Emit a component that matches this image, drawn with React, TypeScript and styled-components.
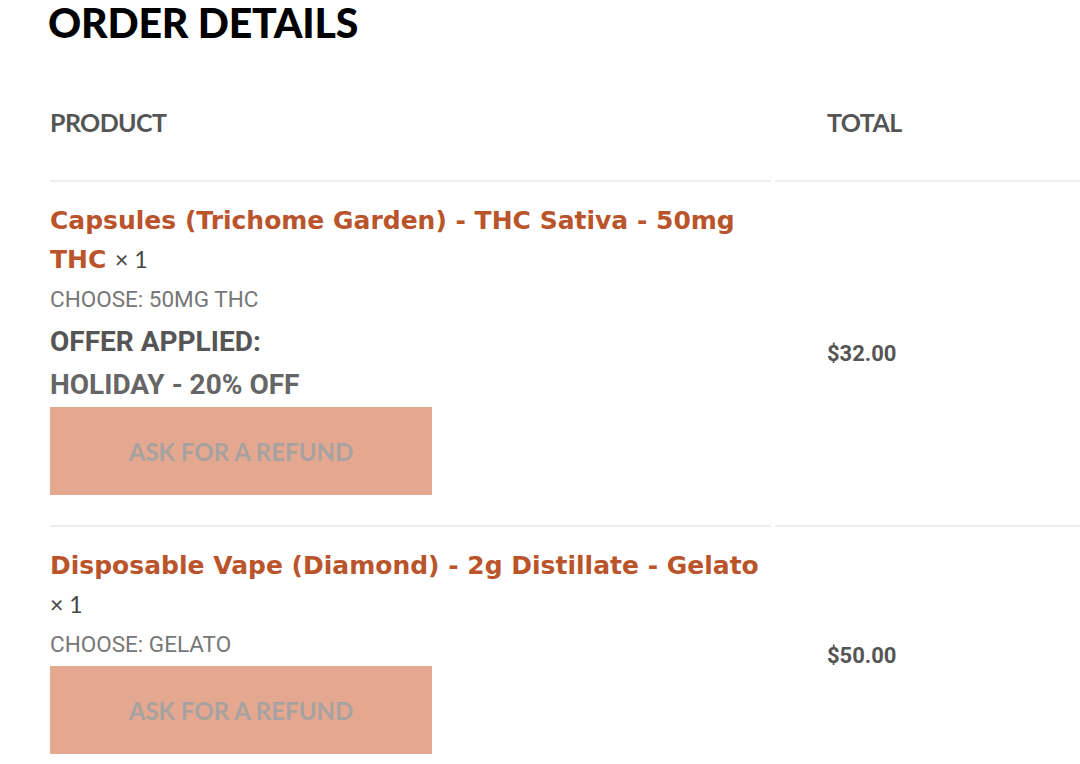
import React from 'react';
import styled, { createGlobalStyle } from 'styled-components';

const GlobalStyle = createGlobalStyle`
  html, body {
    margin: 0;
    padding: 0;
    background: #ffffff;
    overflow: hidden;
  }
`;

const Page = styled.div`
  width: 1080px;
  height: 764px;
  overflow: hidden;
  padding: 1px 0 0 48px;
  box-sizing: border-box;
`;

const Title = styled.h2`
  margin: 0;
  font-family: 'Lato', sans-serif;
  font-weight: 900;
  font-size: 41px;
  line-height: 44px;
  color: #000;
  letter-spacing: -0.2px;
`;

const Table = styled.div`
  margin-top: 57px;
  margin-left: 2px;
  display: grid;
  grid-template-columns: 721px 320px;
  column-gap: 4px;
`;

const HeadCell = styled.div<{ $right?: boolean }>`
  font-family: 'Lato', sans-serif;
  font-weight: 700;
  font-size: 25px;
  line-height: 40px;
  letter-spacing: -0.6px;
  color: #555;
  padding: 0 0 38px ${(p) => (p.$right ? '52px' : '0')};
  border-bottom: 2px solid #eeeeee;
`;

const ProductCell = styled.div`
  border-bottom: 2px solid #eeeeee;
  padding: 19px 0 30px 0;
  display: flex;
  flex-direction: column;
  align-items: flex-start;
`;

const TotalCell = styled.div`
  border-bottom: 2px solid #eeeeee;
  padding-left: 52px;
  display: flex;
  align-items: center;
`;

const ProductName = styled.div`
  font-family: 'DejaVu Sans', sans-serif;
  font-weight: 700;
  font-size: 25px;
  line-height: 39px;
  color: #b9542b;
`;

const Qty = styled.span`
  font-family: 'Lato', sans-serif;
  font-weight: 400;
  font-size: 23px;
  color: #444;
  white-space: nowrap;
`;

const Meta = styled.div`
  margin-top: 6px;
  font-family: 'Roboto', sans-serif;
  font-weight: 400;
  font-size: 22.5px;
  line-height: 28px;
  color: #777;
`;

const OfferLabel = styled.div<{ $tone: string }>`
  margin-top: 15px;
  font-family: 'Roboto', sans-serif;
  font-weight: 700;
  font-size: 28px;
  line-height: 28px;
  color: ${(p) => p.$tone};
`;

const RefundButton = styled.button`
  margin-top: 8px;
  width: 382px;
  height: 88px;
  border: none;
  background: #e4a891;
  color: #a7a2a0;
  font-family: 'Lato', sans-serif;
  font-weight: 700;
  font-size: 24px;
  text-transform: uppercase;
  padding: 0;
`;

const Price = styled.div`
  font-family: 'Roboto', sans-serif;
  font-weight: 700;
  font-size: 22px;
  color: #555;
`;

type Item = {
  name: string;
  option: string;
  offer?: string;
  price: string;
};

const items: Item[] = [
  {
    name: 'Capsules (Trichome Garden) - THC Sativa - 50mg THC',
    option: 'CHOOSE: 50MG THC',
    offer: 'HOLIDAY - 20% OFF',
    price: '$32.00',
  },
  {
    name: 'Disposable Vape (Diamond) - 2g Distillate - Gelato',
    option: 'CHOOSE: GELATO',
    price: '$50.00',
  },
];

const App = () => {
  return (
    <Page>
      <GlobalStyle />
      <Title>ORDER DETAILS</Title>
      <Table>
        <HeadCell>PRODUCT</HeadCell>
        <HeadCell $right>TOTAL</HeadCell>
        {items.map((item) => (
          <React.Fragment key={item.name}>
            <ProductCell>
              <ProductName>
                {item.name} <Qty>× 1</Qty>
              </ProductName>
              <Meta>{item.option}</Meta>
              {item.offer && (
                <>
                  <OfferLabel $tone="#555">OFFER APPLIED:</OfferLabel>
                  <OfferLabel $tone="#666">{item.offer}</OfferLabel>
                </>
              )}
              <RefundButton>Ask for a refund</RefundButton>
            </ProductCell>
            <TotalCell>
              <Price>{item.price}</Price>
            </TotalCell>
          </React.Fragment>
        ))}
      </Table>
    </Page>
  );
};

export default App;
